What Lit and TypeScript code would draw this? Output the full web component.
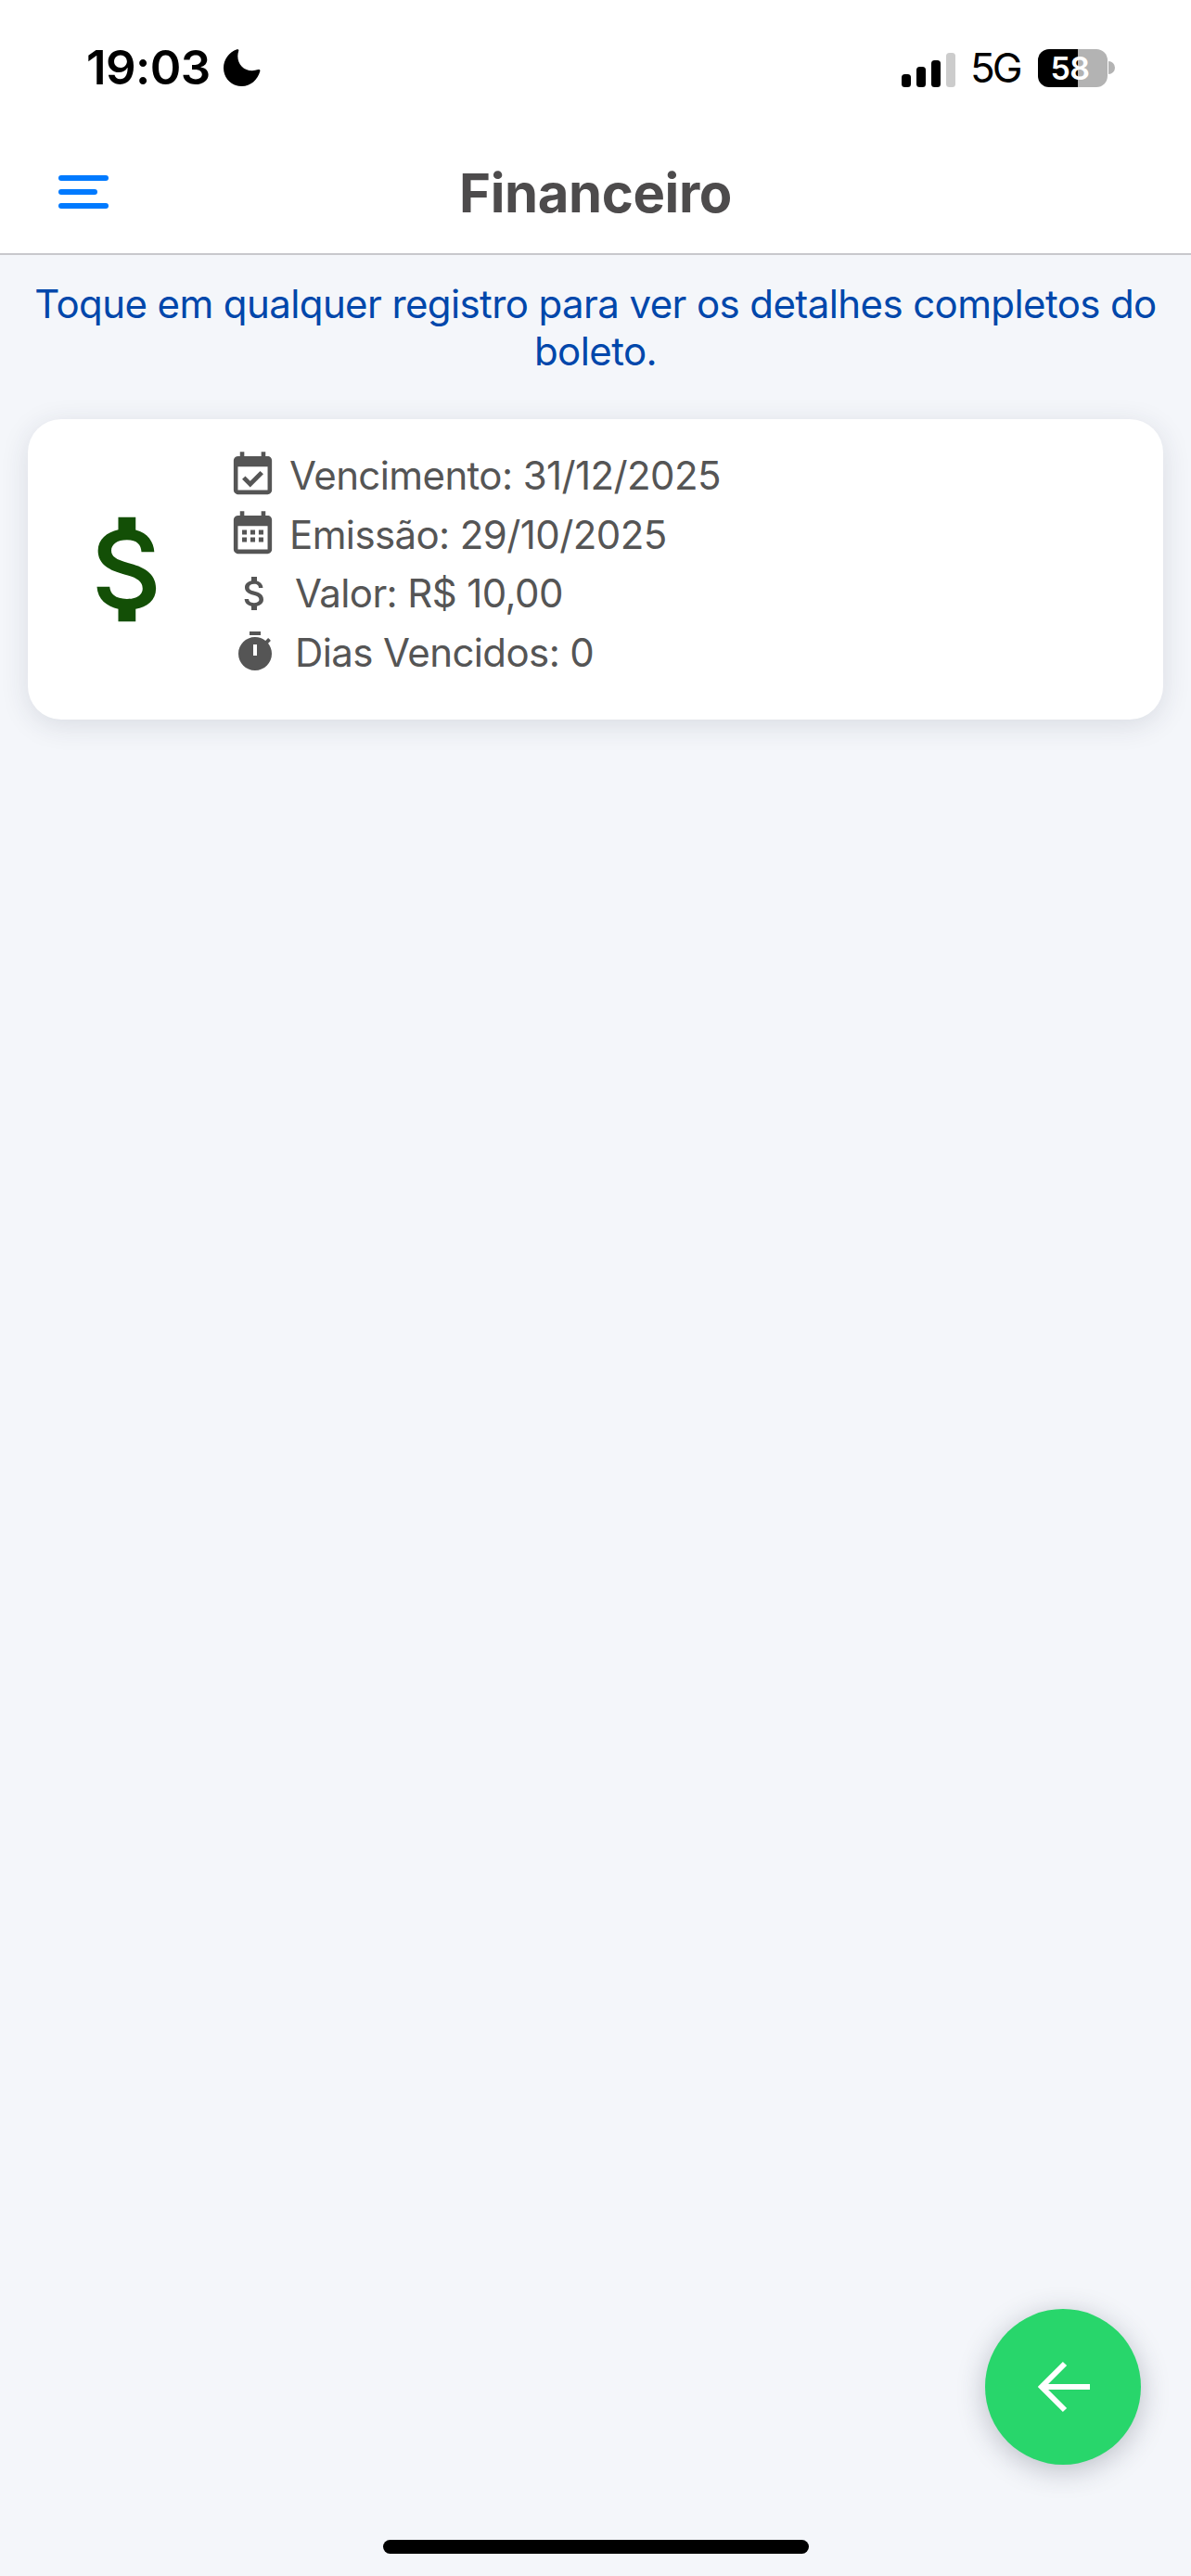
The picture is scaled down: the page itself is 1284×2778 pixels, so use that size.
import { LitElement, html, css, svg } from "lit";
import { customElement } from "lit/decorators.js";

const I = (size: number, body: unknown, cls = "") =>
  html`<svg class=${cls} width=${size} height=${size} viewBox="0 0 24 24" fill="currentColor">${body}</svg>`;

const money = svg`<path d="M11.8 10.9c-2.27-.59-3-1.2-3-2.15 0-1.09 1.01-1.85 2.7-1.85 1.78 0 2.44.85 2.5 2.1h2.21c-.07-1.72-1.12-3.3-3.21-3.81V3h-3v2.16c-1.94.42-3.5 1.68-3.5 3.61 0 2.31 1.91 3.46 4.7 4.13 2.5.6 3 1.48 3 2.41 0 .69-.49 1.79-2.7 1.79-2.06 0-2.87-.92-2.98-2.1h-2.2c.12 2.19 1.76 3.42 3.68 3.83V21h3v-2.15c1.95-.37 3.5-1.5 3.5-3.55 0-2.84-2.43-3.81-4.7-4.4z"/>`;
const calFrame = "M19 3h-1V1h-2v2H8V1H6v2H5C3.89 3 3 3.9 3 5v14c0 1.1.89 2 2 2h14c1.1 0 2-.9 2-2V5c0-1.1-.9-2-2-2zm0 16H5V8h14v11z";
const calCheck = svg`<path d=${calFrame}/><path d="M17 11.500 15.500 10l-4.700 4.700-2.300-2.300L7 13.900l3.800 3.800z"/>`;
const calGrid = svg`<path d=${calFrame}/><path d="M7 9.800h2.200V12H7zM10.900 9.800h2.200V12h-2.200zM14.800 9.800H17V12h-2.200zM7 13.300h2.200v2.200H7zM10.900 13.300h2.200v2.200h-2.200zM14.800 13.300H17v2.200h-2.200z"/>`;
const timer = svg`<path d="M9 1h6v2H9zM19.030 7.390l1.420-1.420c-.43-.51-.9-.99-1.410-1.410l-1.420 1.420C16.070 4.740 14.120 4 12 4c-4.970 0-9 4.030-9 9s4.020 9 9 9 9-4.030 9-9c0-2.120-.74-4.070-1.970-5.610zM13 14h-2V8h2v6z"/>`;

@customElement("app-root")
export class AppRoot extends LitElement {
  static styles = css`
    :host {
      display: block;
      font-family: Inter, "Liberation Sans", sans-serif;
    }
    .page {
      position: relative;
      height: 2778px;
      background: #f4f6fa;
      overflow: hidden;
      display: flex;
      flex-direction: column;
    }
    .top {
      background: #fff;
      height: 273px;
      border-bottom: 2px solid #c8c8cc;
      display: flex;
      flex-direction: column;
    }
    .status {
      height: 150px;
      display: flex;
      justify-content: space-between;
      align-items: flex-start;
      padding: 0 82px 0 93px;
      color: #000;
    }
    .left {
      display: flex;
      align-items: center;
      gap: 14px;
      margin-top: 43px;
      height: 60px;
    }
    .time {
      font-size: 51px;
      font-weight: 600;
      letter-spacing: -0.6px;
      line-height: 60px;
    }
    .right {
      display: flex;
      align-items: center;
      margin-top: 50px;
      height: 46px;
    }
    .bars {
      display: flex;
      align-items: flex-end;
      gap: 6px;
      height: 37px;
      margin-top: 4px;
    }
    .bars i {
      display: block;
      width: 10px;
      border-radius: 3.5px;
      background: #000;
    }
    .bars i.off {
      background: #ccc;
    }
    .net {
      font-size: 44px;
      font-weight: 400;
      letter-spacing: -3px;
      margin-left: 16px;
      line-height: 46px;
      width: 73px;
    }
    .batt {
      position: relative;
      width: 75px;
      height: 41px;
      border-radius: 12px;
      overflow: hidden;
      background: linear-gradient(90deg, #000 0 43px, #b3b3b3 43px);
      color: #fff;
      font-weight: 600;
      font-size: 34px;
      line-height: 42px;
      text-align: center;
      letter-spacing: -0.5px;
      padding-right: 6px;
      box-sizing: border-box;
    }
    .nib {
      width: 7px;
      height: 14px;
      margin-left: 1px;
      background: #b3b3b3;
      border-radius: 0 7px 7px 0;
    }
    .nav {
      position: relative;
      flex: 1;
      display: flex;
      align-items: center;
      justify-content: center;
    }
    .menu {
      position: absolute;
      left: 63px;
      top: 39px;
      display: flex;
      flex-direction: column;
      gap: 9px;
      color: #007aff;
    }
    .menu i {
      display: block;
      width: 54px;
      height: 6px;
      border-radius: 3px;
      background: currentColor;
    }
    .menu i.short {
      width: 42px;
    }
    h1 {
      margin: 0;
      font-size: 58px;
      font-weight: 700;
      color: #4d4b4c;
      line-height: 70px;
      letter-spacing: -0.4px;
      position: relative;
      top: -4px;
    }
    .hint {
      margin: 0;
      padding: 27px 20px 0;
      text-align: center;
      color: #0047ab;
      font-size: 42px;
      line-height: 51px;
      letter-spacing: -0.6px;
    }
    .card {
      margin: 48px 30px 0;
      height: 324px;
      background: #fff;
      border-radius: 36px;
      box-shadow: 0 6px 30px rgba(40, 45, 70, 0.13);
      display: flex;
      align-items: center;
      box-sizing: border-box;
      padding-left: 35px;
    }
    .big {
      color: #134f06;
      display: block;
      flex: none;
    }
    .rows {
      display: flex;
      flex-direction: column;
      margin-left: 30px;
      padding-bottom: 12px;
      color: #555;
      font-size: 42px;
      line-height: 63.5px;
      letter-spacing: -0.6px;
    }
    .row {
      display: flex;
      align-items: center;
      height: 63.5px;
      gap: 12px;
    }
    .row svg {
      flex: none;
      display: block;
    }
    .row.small {
      gap: 19px;
    }
    .row.small svg {
      margin-left: 6px;
    }
    .fab {
      position: absolute;
      left: 1062px;
      top: 2490px;
      width: 168px;
      height: 168px;
      border-radius: 50%;
      background: #28d66b;
      box-shadow: 0 6px 30px rgba(40, 45, 70, 0.28);
      display: flex;
      align-items: center;
      justify-content: center;
      color: #fff;
    }
    .home {
      position: absolute;
      left: 413px;
      top: 2739px;
      width: 459px;
      height: 15px;
      border-radius: 8px;
      background: #000;
    }
  `;

  render() {
    return html`<div class="page">
      <div class="top">
        <div class="status">
          <div class="left">
            <span class="time">19:03</span>
            <svg width="40" height="40" viewBox="0 0 40 40" fill="#000">
              <path d="M14.5 0.2c1.4-.3 2.1.5 1.8 1.6-.7 2-1 3.9-1 5.7 0 9.2 6.6 15.7 15.6 15.7 2 0 4.4-.4 6.4-1.1 1.4-.5 2.5.4 2 1.8C36.700 32.800 29.200 40 19.700 40 8.700 40 0 31.500 0 20.300 0 11.300 6 2.800 14.500.2z"/>
            </svg>
          </div>
          <div class="right">
            <div class="bars">
              <i style="height:14px"></i><i style="height:22px"></i><i style="height:29px"></i><i class="off" style="height:37px"></i>
            </div>
            <span class="net">5G</span>
            <div class="batt">58</div>
            <div class="nib"></div>
          </div>
        </div>
        <div class="nav">
          <div class="menu"><i></i><i class="short"></i><i></i></div>
          <h1>Financeiro</h1>
        </div>
      </div>
      <p class="hint">Toque em qualquer registro para ver os detalhes completos do boleto.</p>
      <div class="card">
        ${I(150, money, "big")}
        <div class="rows">
          <div class="row">${I(55, calCheck)}<span>Vencimento: 31/12/2025</span></div>
          <div class="row">${I(55, calGrid)}<span>Emissão: 29/10/2025</span></div>
          <div class="row small">${I(48, money)}<span>Valor: R$ 10,00</span></div>
          <div class="row small">${I(48, timer)}<span>Dias Vencidos: 0</span></div>
        </div>
      </div>
      <div class="fab">
        <svg width="60" height="60" viewBox="0 0 60 60" fill="none" stroke="#fff" stroke-width="6">
          <path d="M59 30H8M32 5 7 30l25 25"/>
        </svg>
      </div>
      <div class="home"></div>
    </div>`;
  }
}
